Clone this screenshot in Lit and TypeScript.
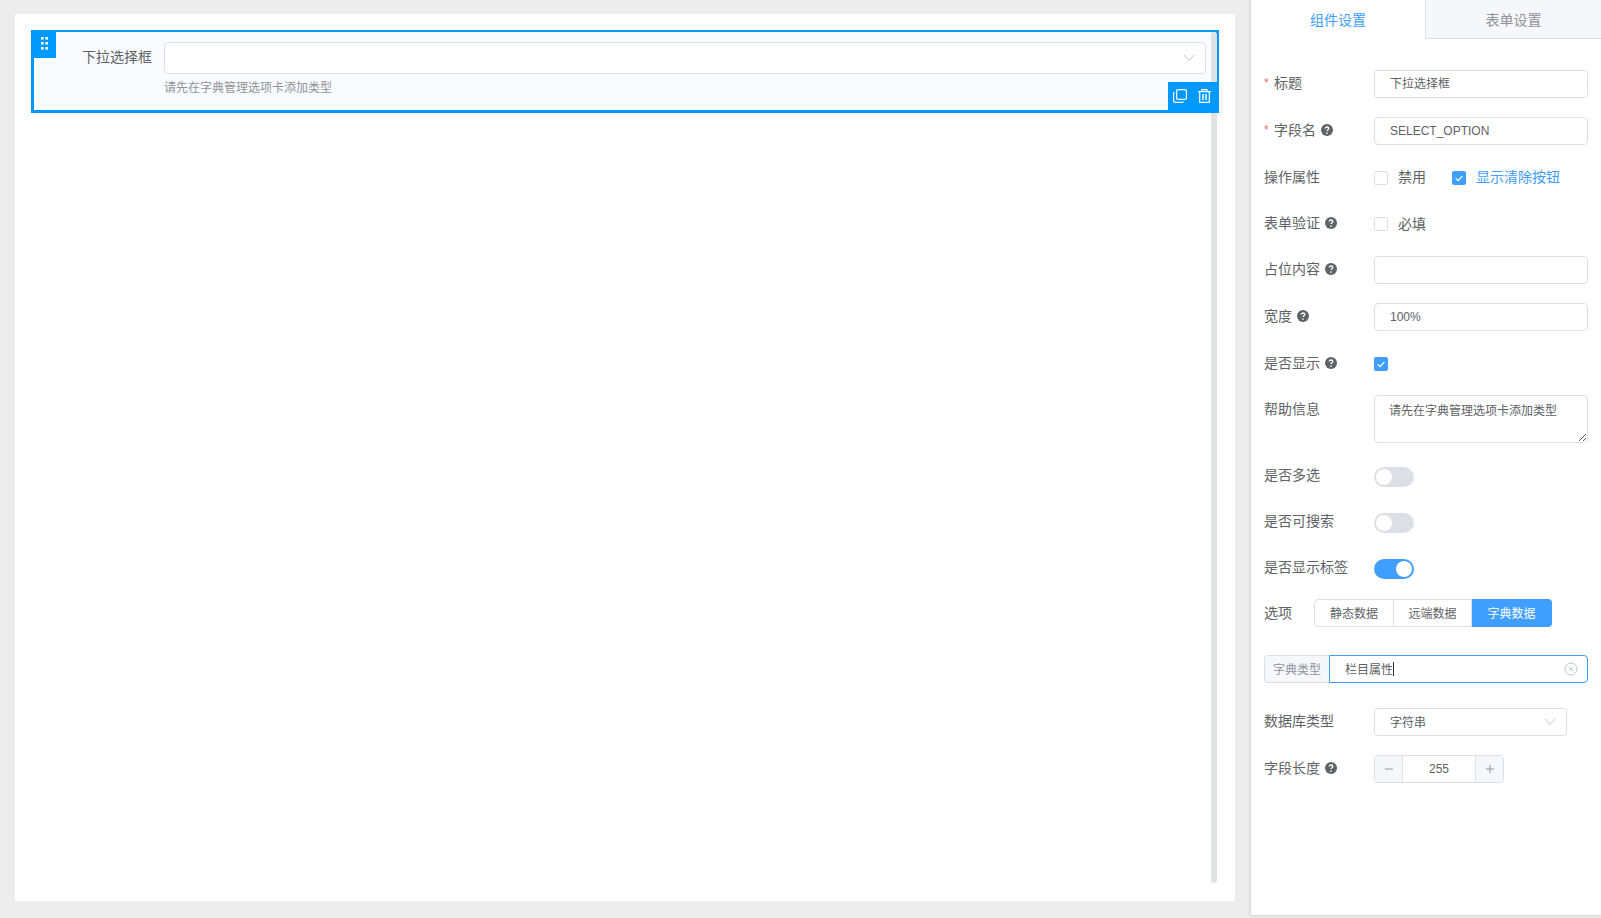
import { LitElement, html, css, svg } from "lit";
import { customElement } from "lit/decorators.js";

const chevron = html`<svg class="chev" viewBox="0 0 12 8" width="12" height="8"><path d="M1 1l5 5.5L11 1" fill="none" stroke="#c0c4cc" stroke-width="1"/></svg>`;
const help = html`<svg class="help" viewBox="0 0 12 12" width="12" height="12"><circle cx="6" cy="6" r="6" fill="#606266"/><path d="M4.2 4.6c0-1 .8-1.6 1.8-1.6s1.8.6 1.8 1.5c0 1.2-1.8 1.2-1.8 2.6" fill="none" stroke="#fff" stroke-width="1.3"/><circle cx="6" cy="9" r=".85" fill="#fff"/></svg>`;
const check = html`<svg viewBox="0 0 14 14" width="14" height="14"><path d="M3.6 7.2l2.4 2.4 4.4-4.6" fill="none" stroke="#fff" stroke-width="1.1"/></svg>`;

@customElement("app-root")
export class AppRoot extends LitElement {
  static styles = css`
    :host { display: flex; width: 1601px; height: 918px; background: #ededed; overflow: hidden;
      font-family: "Liberation Sans", "Noto Sans CJK SC", sans-serif; font-size: 14px; color: #606266; }
    * { box-sizing: border-box; }
    .main { width: 1250px; flex: none; padding: 14px 15px 17px 15px; display: flex; }
    .canvas { flex: 1; background: #fff; padding: 16px; position: relative; }
    .scrollbar { position: absolute; left: 1196px; top: 18px; width: 6px; height: 851px; border-radius: 3px; background: #dfe1e3; z-index: 1; }
    .item { position: relative; height: 83px; background: #f8fbff; border: 3px solid #0099ff; border-top-width: 2px;
      display: flex; padding-top: 10px; }
    .item-label { width: 130px; flex: none; text-align: right; padding-right: 12px; line-height: 30px; }
    .item-body { flex: 1; margin-right: 10px; }
    .select-big { height: 32px; background: #fff; border: 1px solid #dcdfe6; border-radius: 4px; display: flex; align-items: center; justify-content: flex-end; padding-right: 10px; }
    .item-help { font-size: 12px; color: #909399; line-height: 18px; margin-top: 5px; }
    .handle { position: absolute; left: -3px; top: -1px; width: 25px; height: 27px; background: #0099ff; display: flex; align-items: center; justify-content: center; padding: 0 0 3px 2px; }
    .actions { position: absolute; right: -3px; bottom: -3px; width: 51px; height: 31px; background: #0099ff; display: flex; align-items: center; gap: 11px; padding: 0 0 4px 5px; z-index: 2; }
    .panel { width: 351px; flex: none; height: 915px; background: #fff; border-left: 1px solid #dcdfe6; box-shadow: 0 1px 3px rgba(0,0,0,.12); display: flex; flex-direction: column; }
    .tabs { display: flex; height: 39px; flex: none; }
    .tab { width: 174px; flex: none; text-align: center; line-height: 40px; color: #409eff; }
    .tab.off { flex: 1; width: auto; background: #f5f7fa; color: #909399; border-left: 1px solid #dcdfe6; border-bottom: 1px solid #dcdfe6; }
    .form { padding: 31px 13px 0; display: flex; flex-direction: column; }
    .row { display: flex; align-items: center; min-height: 28px; margin-bottom: 19px; }
    .row.tight { margin-bottom: 18px; }
    .row.ops .cb-label { margin-top: -4px; }
    .row.show { margin-bottom: 17px; }
    .row.show .label { margin-top: -3px; }
    .row.top { align-items: flex-start; margin-bottom: 20px; }
    .row.top .label { margin-top: 1px; }
    .row.sw { margin-bottom: 18px; }
    .row.sw .label { margin-top: -5px; }
    .row.opts { margin-top: -2px; margin-bottom: 28px; }
    .row.dict { margin-bottom: 25px; }
    .label { width: 110px; flex: none; display: flex; align-items: center; line-height: 26px; height: 26px; margin-top: -2px; }
    .label.short { width: 50px; margin-top: 0; }
    .star { color: #f56c6c; width: 10px; flex: none; font-size: 12px; line-height: 26px; }
    .help { margin-left: 5px; flex: none; }
    .input { flex: 1; min-width: 0; height: 28px; border: 1px solid #dcdfe6; border-radius: 4px; padding: 0 15px; font: inherit; font-size: 12px; color: #606266; background: #fff; outline: none; }
    .input.cjk { padding-bottom: 3px; }
    textarea.input { display: block; height: 48px; padding: 6px 15px 4px 14px; line-height: 18px; resize: vertical; }
    .cb { width: 14px; height: 14px; border: 1px solid #dcdfe6; border-radius: 2px; background: #fff; flex: none; display: block; }
    .cb.on { background: #409eff; border: none; }
    .cb-label { margin: -2px 26px 0 10px; }
    .cb-label.on { color: #409eff; }
    .switch { width: 40px; height: 20px; border-radius: 10px; background: #dcdfe6; padding: 2px; display: flex; }
    .switch.on { background: #409eff; justify-content: flex-end; }
    .knob { width: 16px; height: 16px; border-radius: 50%; background: #fff; }
    .group { display: flex; }
    .btn { height: 28px; width: 78px; border: 1px solid #dcdfe6; border-left-width: 0; font-size: 12px; line-height: 28px; text-align: center; background: #fff; color: #606266; }
    .btn:first-child { width: 80px; border-left-width: 1px; border-radius: 4px 0 0 4px; }
    .btn.active { width: 80px; background: #409eff; border-color: #409eff; color: #fff; border-radius: 0 4px 4px 0; }
    .addon { width: 65px; flex: none; height: 28px; background: #f5f7fa; border: 1px solid #dcdfe6; border-right: none; border-radius: 4px 0 0 4px; font-size: 12px; color: #909399; text-align: center; line-height: 28px; }
    .dict-input { flex: 1; height: 28px; border: 1px solid #409eff; border-radius: 0 4px 4px 0; display: flex; align-items: center; padding: 0 9px 0 15px; font-size: 12px; }
    .lift { margin-top: -2px; }
    .caret { width: 1px; height: 14px; background: #303133; }
    .grow { flex: 1; }
    .db { width: 193px; height: 28px; flex: none; border: 1px solid #dcdfe6; border-radius: 4px; display: flex; align-items: center; padding: 0 10px 0 15px; font-size: 12px; justify-content: space-between; }
    .num { width: 130px; height: 28px; border: 1px solid #dcdfe6; border-radius: 4px; display: flex; font-size: 12px; overflow: hidden; }
    .num span { flex: 1; text-align: center; line-height: 26px; }
    .num b { width: 28px; flex: none; background: #f5f7fa; display: flex; align-items: center; justify-content: center; }
    .num b:first-child { border-right: 1px solid #dcdfe6; }
    .num b:last-child { border-left: 1px solid #dcdfe6; }
  `;

  private lab(text: string, opts: { star?: boolean; q?: boolean } = {}) {
    return html`<div class="label">${opts.star ? html`<span class="star">*</span>` : ""}<span>${text}</span>${opts.q ? help : ""}</div>`;
  }

  render() {
    return html`
      <div class="main">
        <div class="canvas">
          <div class="item">
            <div class="item-label">下拉选择框</div>
            <div class="item-body">
              <div class="select-big">${chevron}</div>
              <div class="item-help">请先在字典管理选项卡添加类型</div>
            </div>
            <div class="handle">
              <svg viewBox="0 0 7 13" width="7" height="13" fill="#fff">
                ${[1, 6, 11].map((y) => svg`<rect x="0" y="${y - 1}" width="2.6" height="2.6"/><rect x="4.4" y="${y - 1}" width="2.6" height="2.6"/>`)}
              </svg>
            </div>
            <div class="actions">
              <svg viewBox="0 0 14 14" width="14" height="14" fill="none" stroke="#fff" stroke-width="1.2">
                <rect x="3.6" y="0.6" width="9.8" height="9.8" rx="1.5"/>
                <path d="M1.6 3.4A1.2 1.2 0 0 0 .6 4.6v7.2c0 .9.7 1.6 1.6 1.6h7.2c.6 0 1-.4 1.2-1"/>
              </svg>
              <svg viewBox="0 0 13 14" width="13" height="14" fill="none" stroke="#fff" stroke-width="1.2">
                <path d="M0 2.6h13M4 2.6V.7h5v1.9M1.7 2.6v10.7h9.6V2.6"/>
                <path d="M5 5v6M8 5v6" stroke-width="1.5"/>
              </svg>
            </div>
          </div>
          <div class="scrollbar"></div>
        </div>
      </div>
      <div class="panel">
        <div class="tabs"><div class="tab">组件设置</div><div class="tab off">表单设置</div></div>
        <div class="form">
          <div class="row">${this.lab("标题", { star: true })}<input class="input cjk" .value=${"下拉选择框"} /></div>
          <div class="row">${this.lab("字段名", { star: true, q: true })}<input class="input" .value=${"SELECT_OPTION"} /></div>
          <div class="row tight ops">${this.lab("操作属性")}<span class="cb"></span><span class="cb-label">禁用</span><span class="cb on">${check}</span><span class="cb-label on">显示清除按钮</span></div>
          <div class="row tight">${this.lab("表单验证", { q: true })}<span class="cb"></span><span class="cb-label">必填</span></div>
          <div class="row">${this.lab("占位内容", { q: true })}<input class="input" /></div>
          <div class="row">${this.lab("宽度", { q: true })}<input class="input" .value=${"100%"} /></div>
          <div class="row show">${this.lab("是否显示", { q: true })}<span class="cb on">${check}</span></div>
          <div class="row top">${this.lab("帮助信息")}<textarea class="input" .value=${"请先在字典管理选项卡添加类型"}></textarea></div>
          <div class="row sw">${this.lab("是否多选")}<div class="switch"><div class="knob"></div></div></div>
          <div class="row sw">${this.lab("是否可搜索")}<div class="switch"><div class="knob"></div></div></div>
          <div class="row sw">${this.lab("是否显示标签")}<div class="switch on"><div class="knob"></div></div></div>
          <div class="row opts">
            <div class="label short">选项</div>
            <div class="group"><div class="btn">静态数据</div><div class="btn">远端数据</div><div class="btn active">字典数据</div></div>
          </div>
          <div class="row dict">
            <div class="addon">字典类型</div>
            <div class="dict-input"><span class="lift">栏目属性</span><span class="caret"></span><span class="grow"></span>
              <svg viewBox="0 0 14 14" width="14" height="14" fill="none" stroke="#c0c4cc" stroke-width="1"><circle cx="7" cy="7" r="6"/><path d="M5 5l4 4M9 5l-4 4"/></svg>
            </div>
          </div>
          <div class="row">${this.lab("数据库类型")}<div class="db"><span class="lift">字符串</span>${chevron}</div></div>
          <div class="row">${this.lab("字段长度", { q: true })}
            <div class="num">
              <b><svg viewBox="0 0 10 10" width="10" height="10"><path d="M1 5h8" stroke="#909399" stroke-width="1"/></svg></b>
              <span>255</span>
              <b><svg viewBox="0 0 10 10" width="10" height="10"><path d="M1 5h8M5 1v8" stroke="#909399" stroke-width="1"/></svg></b>
            </div>
          </div>
        </div>
      </div>
    `;
  }
}
